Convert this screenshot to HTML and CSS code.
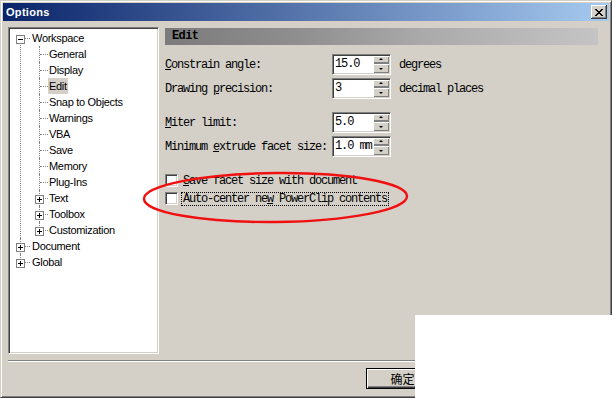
FILE: index.html
```html
<!DOCTYPE html>
<html lang="en">
<head>
  <meta charset="UTF-8" />
  <title>Options</title>
  <link rel="stylesheet" href="styles.css">
</head>
<body>
  <div class="window">
    <div class="titlebar">
      <span class="title">Options</span>
      <span class="close">
        <svg width="8" height="7" viewBox="0 0 8 7"><path d="M0 0h2v1H0zM6 0h2v1H6zM1 1h2v1H1zM5 1h2v1H5zM2 2h4v1H2zM3 3h2v1H3zM2 4h4v1H2zM1 5h2v1H1zM5 5h2v1H5zM0 6h2v1H0zM6 6h2v1H6z" fill="#000"/></svg>
      </span>
    </div>

    <div class="client">
      <div class="main">
        <ul class="tree">
          <li>
            <div class="row"><span class="box"></span><span class="label">Workspace</span></div>
            <ul>
              <li><div class="row leaf"><span class="label">General</span></div></li>
              <li><div class="row leaf"><span class="label">Display</span></div></li>
              <li><div class="row leaf"><span class="label selected">Edit</span></div></li>
              <li><div class="row leaf"><span class="label">Snap to Objects</span></div></li>
              <li><div class="row leaf"><span class="label">Warnings</span></div></li>
              <li><div class="row leaf"><span class="label">VBA</span></div></li>
              <li><div class="row leaf"><span class="label">Save</span></div></li>
              <li><div class="row leaf"><span class="label">Memory</span></div></li>
              <li><div class="row leaf"><span class="label">Plug-Ins</span></div></li>
              <li><div class="row"><span class="box plus"></span><span class="label">Text</span></div></li>
              <li><div class="row"><span class="box plus"></span><span class="label">Toolbox</span></div></li>
              <li><div class="row"><span class="box plus"></span><span class="label">Customization</span></div></li>
            </ul>
          </li>
          <li><div class="row"><span class="box plus"></span><span class="label">Document</span></div></li>
          <li><div class="row"><span class="box plus"></span><span class="label">Global</span></div></li>
        </ul>

        <div class="page">
          <div class="header">Edit</div>

          <div class="fields">
            <div class="field">
              <span class="flabel"><u>C</u>onstrain angle:</span>
              <span class="spin"><span class="value">15.0</span><span class="arrows"><span class="up"></span><span class="down"></span></span></span>
              <span class="unit">degrees</span>
            </div>
            <div class="field">
              <span class="flabel">Drawing <u>p</u>recision:</span>
              <span class="spin"><span class="value">3</span><span class="arrows"><span class="up"></span><span class="down"></span></span></span>
              <span class="unit">decimal places</span>
            </div>
            <div class="field group">
              <span class="flabel"><u>M</u>iter limit:</span>
              <span class="spin"><span class="value">5.0</span><span class="arrows"><span class="up"></span><span class="down"></span></span></span>
            </div>
            <div class="field">
              <span class="flabel">Minimum <u>e</u>xtrude facet size:</span>
              <span class="spin"><span class="value">1.0 mm</span><span class="arrows"><span class="up"></span><span class="down"></span></span></span>
            </div>
          </div>

          <div class="check first">
            <span class="checkbox"></span>
            <span class="clabel"><u>S</u>ave facet size with document</span>
          </div>
          <div class="check">
            <span class="checkbox"></span>
            <span class="clabel focus">Auto-center ne<u>w</u> PowerClip contents</span>
          </div>
        </div>
      </div>

      <div class="separator"></div>

      <div class="buttons">
        <button class="btn default">确定</button>
        <button class="btn">取消</button>
        <button class="btn">帮助</button>
      </div>
    </div>
  </div>

  <svg class="mark" width="270" height="56" viewBox="0 0 270 56">
    <ellipse cx="134.5" cy="27.5" rx="131.5" ry="24.5" transform="rotate(-0.6 134.5 27.5)" fill="none" stroke="#f01010" stroke-width="2.4"/>
  </svg>
  <div class="crop"></div>
</body>
</html>
```

FILE: styles.css
```css
body { margin: 0; position: relative; width: 612px; height: 398px; overflow: hidden; background: #fff; }

.window { box-sizing: border-box; width: 612px; height: 398px; padding: 2px; background: #d4d0c8;
  border: 1px solid; border-color: #d4d0c8 #404040 #404040 #d4d0c8;
  box-shadow: inset 1px 1px #fff, inset -1px -1px #808080; }

.titlebar { height: 18px; display: flex; align-items: center; justify-content: space-between;
  background: linear-gradient(to right, #0a246a, #a6caf0); padding: 0 2px 0 2px; }
.title { color: #fff; font: bold 11px "Liberation Sans", Arial, sans-serif; letter-spacing: 0.3px; padding-left: 1px; }
.close { width: 16px; height: 14px; box-sizing: border-box; display: flex; align-items: center; justify-content: center;
  background: #d4d0c8; padding: 1px 0 0 0;
  box-shadow: inset -1px -1px #404040, inset 1px 1px #fff, inset -2px -2px #808080; }
.close svg { display: block; }

.client { padding: 6px 5px 0 5px; }
.main { display: flex; height: 327px; }

/* tree */
.tree { box-sizing: border-box; width: 151px; height: 327px; margin: 0; padding: 2px 0 0 1px; list-style: none;
  background: #fff; border: 1px solid; border-color: #808080 #fff #fff #808080;
  box-shadow: inset 1px 1px #404040, inset -1px -1px #d4d0c8;
  font: 11px "Liberation Sans", Arial, sans-serif; letter-spacing: -0.3px; color: #000; }
.tree ul { list-style: none; margin: 0 0 0 19px; padding: 0; }
.tree li { position: relative; }
.tree li::after { content: ""; position: absolute; left: 10px; top: 0; bottom: 0; border-left: 1px dotted #808080; }
.tree li:last-child::after { bottom: auto; height: 8px; }
.tree > li:first-child::after { top: 8px; }
.tree li::before { content: ""; position: absolute; left: 11px; top: 8px; width: 9px; border-top: 1px dotted #808080; }
.tree ul li::before { width: 8px; }

.row { display: flex; align-items: flex-start; height: 16px; padding-left: 6px; }
.row.leaf { padding-left: 19px; }
.tree > li > .row .label { margin-left: 6px; }
.tree ul .row .box + .label { margin-left: 4px; }
.label { position: relative; z-index: 1; line-height: 16px; padding: 0 1px; white-space: nowrap; }
.label.selected { background: #d4d0c8; }

.box { position: relative; z-index: 1; box-sizing: border-box; width: 9px; height: 9px; margin-top: 5px;
  border: 1px solid #808080; background: #fff; flex: none; }
.box::before { content: ""; position: absolute; left: 1px; top: 3px; width: 5px; height: 1px; background: #000; }
.box.plus::after { content: ""; position: absolute; left: 3px; top: 1px; width: 1px; height: 5px; background: #000; }

/* right page */
.page { width: 433px; margin-left: 6px; font: 12px "Liberation Mono", "DejaVu Sans Mono", monospace; letter-spacing: -1.2px; color: #000; }
.header { margin-top: 1px; height: 17px; line-height: 17px; padding-left: 7px; font-weight: bold; letter-spacing: -0.6px;
  background: linear-gradient(to right, #7b7b7b, #8e8e8e 30%, #aaaaaa 60%, #c4c4c4); }

.fields { margin-top: 9px; }
.field { display: flex; align-items: center; height: 21px; margin-bottom: 3px; }
.field.group { margin-top: 13px; }
.flabel { width: 167px; white-space: nowrap; }
.unit { margin-left: 8px; white-space: nowrap; }

.spin { box-sizing: border-box; display: flex; width: 59px; height: 21px; padding: 1px 1px 1px 2px; background: #fff;
  border: 1px solid; border-color: #808080 #fff #fff #808080;
  box-shadow: inset 1px 1px #404040, inset -1px -1px #d4d0c8; }
.spin .value { flex: 1; line-height: 17px; font-size: 12px; letter-spacing: -1.1px; white-space: nowrap; }
.arrows { display: flex; flex-direction: column; width: 16px; }
.up, .down { display: flex; align-items: center; justify-content: center; background: #d4d0c8; }
.up { height: 8px; box-shadow: inset 1px 1px #fff, inset 0 -2px #808080, inset -1px 0 #808080; }
.down { height: 9px; box-shadow: inset 1px 1px #fff, inset -1px -1px #808080; }
.up::before { content: ""; border-left: 2px solid transparent; border-right: 2px solid transparent; border-bottom: 2px solid #000; margin-bottom: 2px; }
.down::before { content: ""; border-left: 2px solid transparent; border-right: 2px solid transparent; border-top: 2px solid #000; }

.check { display: flex; align-items: center; height: 13px; margin-top: 5px; }
.check.first { margin-top: 17px; }
.checkbox { box-sizing: border-box; width: 13px; height: 13px; background: #fff; flex: none;
  border: 1px solid; border-color: #808080 #fff #fff #808080;
  box-shadow: inset 1px 1px #404040, inset -1px -1px #d4d0c8; }
.clabel { margin-left: 3px; padding: 0 1px; line-height: 12px; border: 1px solid transparent; white-space: nowrap; }
.clabel.focus { border: 1px dotted #000; }

.separator { margin-top: 6px; height: 0; border-top: 1px solid #808080; border-bottom: 1px solid #fff; }

.buttons { display: flex; justify-content: flex-end; gap: 6px; margin-top: 6px; padding-right: 1px; }
.btn { box-sizing: border-box; width: 75px; height: 21px; padding: 0; background: #d4d0c8; border: none;
  font: 12px "Noto Sans CJK SC", sans-serif; color: #000;
  box-shadow: inset 1px 1px #fff, inset -1px -1px #404040, inset -2px -2px #808080; }
.btn.default { border: 1px solid #000; padding-right: 2px; }

.mark { position: absolute; left: 141px; top: 170px; pointer-events: none; }
.crop { position: absolute; left: 415px; top: 315px; width: 197px; height: 83px; background: #fff; }
```
